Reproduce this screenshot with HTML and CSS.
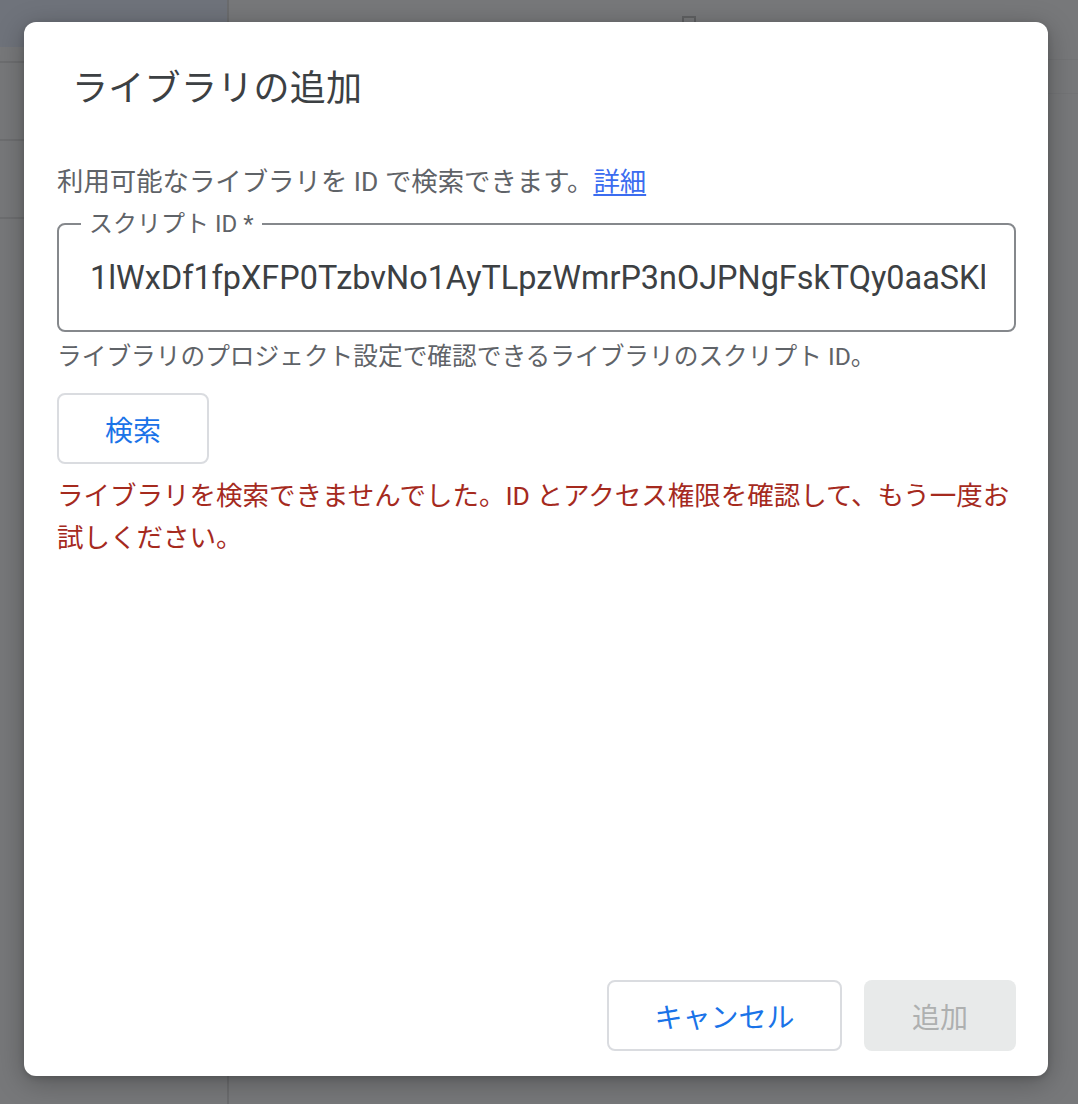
FILE: index.html
```html
<!DOCTYPE html>
<html lang="ja">
<head>
<meta charset="utf-8">
<title>ライブラリの追加</title>
<link rel="stylesheet" href="styles.css">
</head>
<body>
<div class="page">
  <aside class="sidebar">
    <div class="sidebar-top"></div>
    <div class="sidebar-row short"></div>
    <div class="sidebar-row"></div>
    <div class="sidebar-row"></div>
  </aside>
  <main class="main">
    <div class="main-head"><span class="head-icon"></span></div>
    <div class="main-row"></div>
  </main>
</div>

<div class="dialog" role="dialog" aria-labelledby="dlg-title">
  <h1 class="dialog-title" id="dlg-title">ライブラリの追加</h1>
  <p class="dialog-desc">利用可能なライブラリを ID で検索できます。<a class="link" href="#">詳細</a></p>
  <fieldset class="field">
    <legend class="field-label">スクリプト ID *</legend>
    <input class="field-input" type="text" value="1lWxDf1fpXFP0TzbvNo1AyTLpzWmrP3nOJPNgFskTQy0aaSKl0Yc">
  </fieldset>
  <p class="field-help">ライブラリのプロジェクト設定で確認できるライブラリのスクリプト ID。</p>
  <button class="btn btn-outline btn-search" type="button">検索</button>
  <p class="error">ライブラリを検索できませんでした。ID とアクセス権限を確認して、もう一度お試しください。</p>
  <div class="dialog-actions">
    <button class="btn btn-outline btn-cancel" type="button">キャンセル</button>
    <button class="btn btn-disabled btn-add" type="button" disabled>追加</button>
  </div>
</div>
</body>
</html>
```

FILE: styles.css
```css
* { box-sizing: border-box; }

html, body {
  margin: 0;
  padding: 0;
}

body {
  width: 1078px;
  height: 1104px;
  overflow: hidden;
  background: #77787a;
  font-family: Roboto, "Noto Sans CJK JP", sans-serif;
  position: relative;
}

/* dimmed page behind the dialog */
.page {
  display: grid;
  grid-template-columns: 229px 1fr;
  height: 100%;
}

.sidebar {
  border-right: 2px solid #6b6c6e;
  display: flex;
  flex-direction: column;
}

.sidebar-top {
  height: 47px;
  background: #6f737b;
}

.sidebar-row {
  height: 78px;
  border-bottom: 2px solid #6d6e70;
}

.sidebar-row.short {
  height: 16px;
}

.main {
  display: flex;
  flex-direction: column;
}

.main-head {
  height: 60px;
  border-bottom: 1px solid #737476;
  position: relative;
}

.head-icon {
  position: absolute;
  left: 453px;
  top: 16px;
  width: 14px;
  height: 14px;
  border: 2px solid #5f6062;
}

.main-row {
  height: 34px;
  border-bottom: 1px solid #737476;
}

/* dialog */
.dialog {
  position: absolute;
  left: 24px;
  top: 22px;
  width: 1024px;
  height: 1054px;
  background: #fff;
  border-radius: 12px;
  box-shadow: 0 6px 28px rgba(0, 0, 0, 0.28), 0 2px 6px rgba(0, 0, 0, 0.15);
  padding: 45px 32px 25px 33px;
  display: flex;
  flex-direction: column;
  align-items: flex-start;
}

.dialog-title {
  margin: 0;
  padding-left: 15px;
  font-size: 36px;
  line-height: 44px;
  font-weight: 400;
  color: #3c4043;
  letter-spacing: 0.3px;
}

.dialog-desc {
  margin: 53px 0 0 0;
  font-size: 26.4px;
  line-height: 36px;
  color: #5f6368;
}

.link {
  color: #3b6cf0;
  text-decoration: underline;
  text-underline-offset: 3px;
}

.field {
  align-self: stretch;
  margin: 10px 0 0 0;
  padding: 0 0 12px 0;
  border: 2px solid #85888c;
  border-radius: 8px;
  min-width: 0;
}

.field-label {
  margin-left: 22px;
  padding: 0 8px;
  font-size: 24px;
  line-height: 28px;
  color: #5f6368;
}

.field-input {
  display: block;
  width: 100%;
  height: 80px;
  margin: 0;
  padding: 0 29px 0 31px;
  border: none;
  outline: none;
  background: transparent;
  font-family: Roboto, "Noto Sans CJK JP", sans-serif;
  font-size: 32.4px;
  color: #3c4043;
}

.field-help {
  margin: 9px 0 0 0;
  font-size: 24.7px;
  line-height: 32px;
  color: #5f6368;
}

.btn {
  font-family: Roboto, "Noto Sans CJK JP", sans-serif;
  font-size: 28px;
  height: 71px;
  border-radius: 8px;
  padding: 0;
  display: flex;
  align-items: center;
  justify-content: center;
}

.btn-outline {
  background: #fff;
  border: 2px solid #dadce0;
  color: #1a73e8;
}

.btn-search {
  margin-top: 20px;
  width: 152px;
}

.error {
  margin: 11px 0 0 0;
  font-size: 26.5px;
  line-height: 42px;
  color: #a52a1e;
}

.dialog-actions {
  margin-top: auto;
  align-self: stretch;
  display: flex;
  justify-content: flex-end;
  gap: 22px;
}

.btn-cancel {
  width: 235px;
}

.btn-disabled {
  background: #e8eaea;
  border: none;
  color: #aeb0b0;
}

.btn-add {
  width: 152px;
}
```
